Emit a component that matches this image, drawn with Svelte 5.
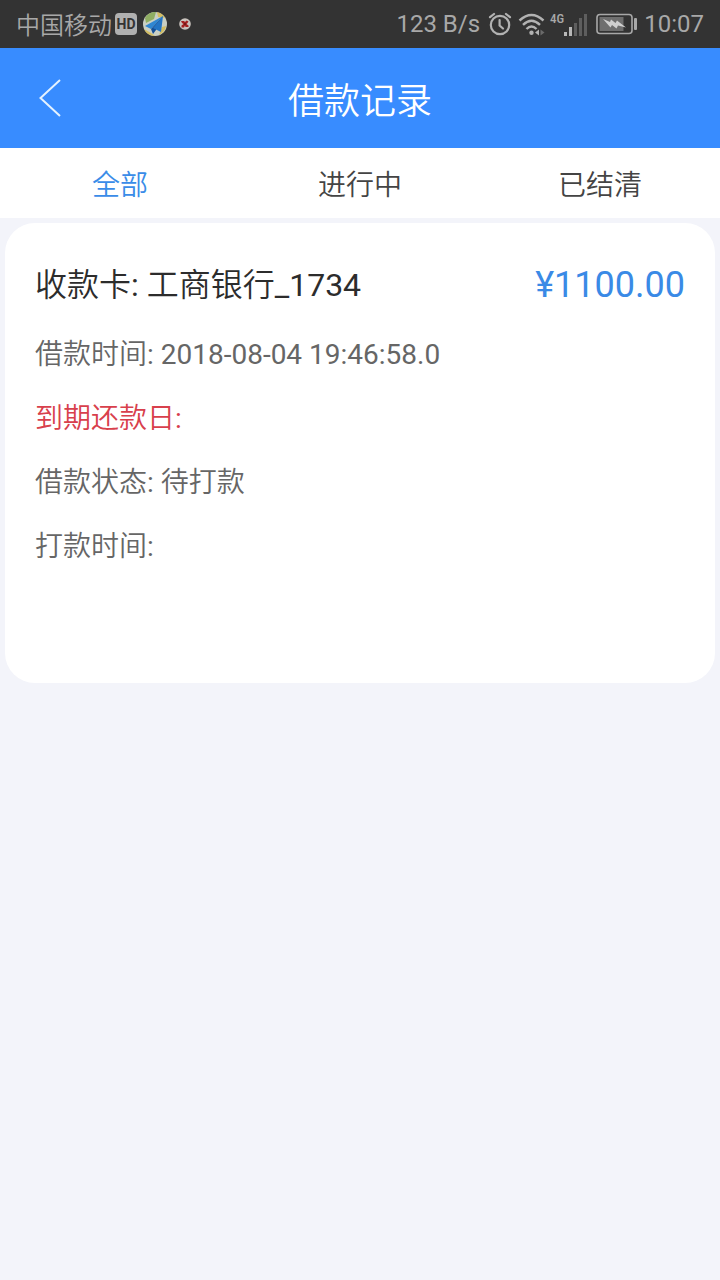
<script>
  const tabs = ['全部', '进行中', '已结清'];
  let active = $state(0);

  const record = {
    bank: '工商银行',
    tail: '_1734',
    amount: '¥1100.00',
    rows: [
      { label: '借款时间', time: '2018-08-04 19:46:58.0' },
      { label: '到期还款日', due: true },
      { label: '借款状态', text: '待打款' },
      { label: '打款时间' }
    ]
  };
</script>

<div class="page">
  <div class="status">
    <div class="side left">
      <span class="carrier">中国移动</span>
      <span class="hd">HD</span>
      <svg width="24" height="24" viewBox="0 0 24 24" aria-hidden="true">
        <circle cx="12" cy="12" r="12" fill="#c9cfc4" />
        <path d="M2 6A12 12 0 0 1 13 0L11 7L3 11Z" fill="#8fae62" />
        <path d="M14 0A12 12 0 0 1 22 6L15 5Z" fill="#d3bd62" />
        <path d="M1 17L8 21L12 24A12 12 0 0 1 1 17Z" fill="#d3bd62" />
        <path d="M19 15L23 14A12 12 0 0 1 16 23Z" fill="#d3bd62" />
        <path d="M20 4L2 14L8 17Z" fill="#2f86d2" />
        <path d="M20 4L8 17L10 22L13 18Z" fill="#154f96" />
        <path d="M20 4L10 16L18 20Z" fill="#2374c4" />
      </svg>
      <svg class="dot" width="12" height="12" viewBox="0 0 12 12" aria-hidden="true">
        <circle cx="6" cy="6" r="5.8" fill="#c9c3bd" />
        <path d="M2 3H5L6 4L7.500 2.500L9.500 3.500L8.5 5L7.5 6L9.500 7.5V9H6.5L6 7.5L5 9.500H2.500V7.5L4.5 6L3 5Z" fill="#a3201f" />
        <circle cx="6" cy="6" r="0.8" fill="#3a1414" />
      </svg>
    </div>
    <div class="side right">
      <span>123 B/s</span>
      <svg class="alarm" width="24" height="24" viewBox="0 0 24 24" fill="none" stroke="#b2b2b2" stroke-width="2.2" stroke-linecap="round" aria-hidden="true">
        <circle cx="12" cy="13" r="9.2" />
        <path d="M11.6 8V13.5L15 16.5M2 5.2L6 2M22 5.2L18 2" />
      </svg>
      <svg class="wifi" width="28" height="24" viewBox="0 0 28 24" fill="none" stroke="#b2b2b2" stroke-width="2.4" aria-hidden="true">
        <path d="M1.5 8.5Q13.5 -2.5 25.5 8.5M5 12.8Q13.5 4.6 22 12.8M8.5 17Q13.5 12 18.5 17" />
        <circle cx="13.5" cy="20.8" r="2.2" fill="#b2b2b2" stroke="none" />
        <path d="M17 20.5L21 17.5V23.5Z" fill="#b2b2b2" stroke="none" />
        <path d="M22.5 17.5L26.5 20.5L22.5 23.5Z" fill="#6a6a6a" stroke="none" />
      </svg>
      <span class="signal">
        <span class="net">4G</span>
        <svg width="24" height="22" viewBox="0 0 24 22" aria-hidden="true">
          <path d="M0 18H3V22H0ZM5 13H8V22H5Z" fill="#b8b8b8" />
          <path d="M10 9H13V22H10ZM15 4H18V22H15ZM20 0H23V22H20Z" fill="#5e5e5e" />
        </svg>
      </span>
      <svg class="battery" width="42" height="22" viewBox="0 0 42 22" aria-hidden="true">
        <rect x="1" y="1.5" width="35" height="19" rx="3" fill="none" stroke="#a8a8a8" stroke-width="1.6" />
        <rect x="3.5" y="4" width="24" height="14" fill="#6f6f6f" />
        <path d="M7 6L14 9L15 6.5L19.5 10L21 7.5L30 14.5L22 12.5L20.5 15.5L16 12L14.5 14.5Z" fill="#d0d0d0" />
        <rect x="38" y="5" width="3" height="12" rx="1" fill="#a8a8a8" />
      </svg>
      <span>10:07</span>
    </div>
  </div>

  <header>
    <button class="back" aria-label="返回">
      <svg width="22" height="38" viewBox="0 0 22 38" fill="none" stroke="#e4f2ff" stroke-width="2" aria-hidden="true">
        <path d="M21 1L1.5 19L21 37" />
      </svg>
    </button>
    <h1>借款记录</h1>
  </header>

  <nav>
    {#each tabs as tab, i}
      <button class="tab" class:active={active === i} onclick={() => (active = i)}>{tab}</button>
    {/each}
  </nav>

  <main>
    <article>
      <div class="top">
        <h2>收款卡<span class="latin">{': '}</span>{record.bank}<span class="latin">{record.tail}</span></h2>
        <span class="amount">{record.amount}</span>
      </div>
      {#each record.rows as row}
        <p class:due={row.due}>{row.label}<span class="latin">: {row.time ?? ''}</span>{row.text ?? ''}</p>
      {/each}
    </article>
  </main>
</div>

<style>
  :global(body) {
    margin: 0;
    background: #f3f4fa;
  }
  .page {
    min-height: 100vh;
    background: #f3f4fa;
    font-family: Roboto, 'Noto Sans CJK SC', sans-serif;
    font-weight: 350;
  }
  .status {
    display: flex;
    justify-content: space-between;
    align-items: center;
    height: 48px;
    padding: 0 16px;
    background: #333;
    color: #a8a8a8;
    font-size: 24px;
    line-height: 48px;
    white-space: nowrap;
  }
  .side {
    display: flex;
    align-items: center;
  }
  .right,
  .latin {
    font-weight: 400;
  }
  .carrier {
    padding-top: 4px;
    line-height: 44px;
  }
  .hd {
    margin: 0 6px 0 3px;
    width: 22px;
    height: 22px;
    border-radius: 4px;
    background: #b0b0b0;
    color: #333;
    font-size: 14px;
    font-weight: 700;
    line-height: 22px;
    text-align: center;
  }
  .dot {
    margin-left: 12px;
  }
  .alarm {
    margin-left: 8px;
  }
  .wifi {
    margin-left: 6px;
  }
  .signal {
    display: flex;
    align-items: flex-end;
    margin-left: 4px;
  }
  .net {
    padding-bottom: 10px;
    font-family: 'Roboto Condensed', Roboto, sans-serif;
    font-size: 13px;
    font-weight: 500;
    line-height: 14px;
  }
  .battery {
    margin: 0 6px 0 8px;
  }
  button {
    border: 0;
    padding: 0;
    background: none;
    color: inherit;
    font: inherit;
    cursor: pointer;
  }
  header {
    display: grid;
    grid-template-columns: 100px 1fr 100px;
    align-items: center;
    height: 100px;
    background: #388cff;
    color: #fff;
  }
  .back {
    display: flex;
    align-items: center;
    height: 100px;
    padding-left: 39px;
  }
  h1 {
    margin: 0;
    padding-top: 8px;
    font-size: 36px;
    font-weight: 350;
    line-height: 92px;
    text-align: center;
  }
  nav {
    display: grid;
    grid-template-columns: repeat(3, 1fr);
    background: #fff;
    color: #444;
  }
  .tab {
    padding-top: 6px;
    font-size: 28px;
    line-height: 64px;
  }
  .tab.active {
    color: #3a8ce8;
  }
  main {
    padding: 5px;
  }
  article {
    padding: 30px 30px 104px;
    border-radius: 30px;
    background: #fff;
    color: #666;
  }
  .top {
    display: flex;
    justify-content: space-between;
    margin-bottom: 6px;
    line-height: 64px;
  }
  h2 {
    margin: 0;
    color: #2c2c2c;
    font-size: 32px;
    font-weight: 350;
    white-space: pre-wrap;
  }
  .amount {
    color: #3a8ae6;
    font-size: 36px;
    font-weight: 400;
  }
  p {
    margin: 0;
    font-size: 28px;
    line-height: 64px;
  }
  .due {
    color: #d8404c;
  }
</style>
